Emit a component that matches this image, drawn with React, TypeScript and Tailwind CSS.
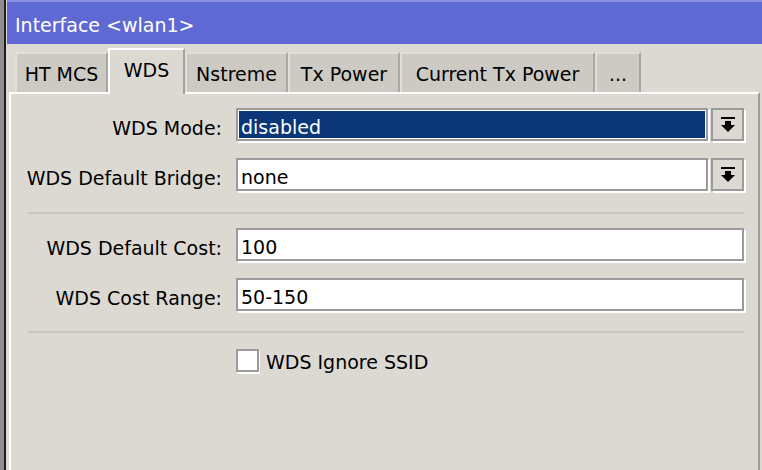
import * as React from "react";

// Winbox-style "Interface <wlan1>" dialog, WDS tab

const tabs: { label: string; w: string }[] = [
  { label: "HT MCS", w: "w-[93px]" },
  { label: "WDS", w: "w-[77px]" },
  { label: "Nstreme", w: "w-[103px]" },
  { label: "Tx Power", w: "w-[112px]" },
  { label: "Current Tx Power", w: "w-[195px]" },
  { label: "...", w: "w-[46px]" },
];

function DropIcon() {
  return (
    <svg width="14" height="16" viewBox="0 0 14 16" className="block">
      <rect x="0" y="0" width="14" height="2" fill="#000" />
      <rect x="4" y="4" width="6" height="4" fill="#000" />
      <polygon points="0,8 14,8 7,15" fill="#000" />
    </svg>
  );
}

function Field({ value, selected }: { value: string; selected?: boolean }) {
  return (
    <div className="h-[33px] flex-1 border-2 border-[#9b9b9b] bg-white p-[1px] shadow-[2px_2px_0_0_#ffffff]">
      <div
        className={
          selected
            ? "flex h-full items-center bg-[#0b3678] pl-[2px] pt-[5px] text-white"
            : "flex h-full items-center pl-[2px] pt-[5px] text-black"
        }
      >
        {value}
      </div>
    </div>
  );
}

function ComboButton() {
  return (
    <div className="flex h-[33px] w-[33px] shrink-0 items-center justify-center border-2 border-[#9b9b9b] bg-[#dcd9d3] shadow-[2px_2px_0_0_#ffffff]">
      <DropIcon />
    </div>
  );
}

function Label({ children }: { children: React.ReactNode }) {
  return (
    <div className="flex h-[35px] items-center justify-end whitespace-nowrap pt-[5px]">{children}</div>
  );
}

export default function App() {
  return (
    <div className="flex h-[470px] w-[762px] overflow-hidden bg-[#dcd9d3] font-['DejaVu_Sans',sans-serif] text-[19px] leading-none text-black">
      <div className="w-[4px] shrink-0 bg-[#8e8e8e]" />
      <div className="w-[2px] shrink-0 bg-[#1e1e1e]" />
      <div className="flex min-w-0 flex-1 flex-col">
        {/* title bar */}
        <div className="ml-[1px] flex h-[44px] shrink-0 items-center border-t-2 border-[#8a91e4] bg-[#5f69d4] pl-[8px] pt-[5px] text-white">
          Interface &lt;wlan1&gt;
        </div>

        {/* tabs */}
        <div className="relative z-10 mt-[4px] flex h-[44px] items-end pl-[9px]">
          {tabs.map((t) =>
            t.label === "WDS" ? (
              <div
                key={t.label}
                className={`-mb-[2px] flex h-[46px] shrink-0 justify-center border-l-2 border-t-2 border-r-2 border-l-white border-t-white border-r-[#a3a09b] bg-[#dcd9d3] pt-[11px] ${t.w}`}
              >
                {t.label}
              </div>
            ) : (
              <div
                key={t.label}
                className={`flex h-[40px] shrink-0 items-center justify-center border-l-2 border-t-2 border-r-2 border-l-[#e2dfd9] border-t-[#e2dfd9] border-r-[#aaa7a2] bg-[#cdcac4] pt-[3px] ${t.w}`}
              >
                {t.label}
              </div>
            )
          )}
        </div>

        {/* tab page */}
        <div className="ml-[3px] mr-[2px] flex-1 border-l-2 border-t-2 border-r-2 border-l-white border-t-white border-r-[#9b9b9b] pl-[17px] pr-[14px] pt-[14px]">
          <div className="grid grid-cols-[194px_1fr] gap-x-[14px] gap-y-[15px]">
            <Label>WDS Mode:</Label>
            <div className="flex gap-[3px]">
              <Field value="disabled" selected />
              <ComboButton />
            </div>
            <Label>WDS Default Bridge:</Label>
            <div className="flex gap-[3px]">
              <Field value="none" />
              <ComboButton />
            </div>
          </div>

          <div className="mb-[14px] mt-[19px] h-[2px] bg-[#c9c6c0]" />

          <div className="grid grid-cols-[194px_1fr] gap-x-[14px] gap-y-[15px]">
            <Label>WDS Default Cost:</Label>
            <div className="flex">
              <Field value="100" />
            </div>
            <Label>WDS Cost Range:</Label>
            <div className="flex">
              <Field value="50-150" />
            </div>
          </div>

          <div className="mb-[13px] mt-[18px] h-[2px] bg-[#c9c6c0]" />

          <div className="flex items-center gap-[7px] pl-[208px] pt-[3px]">
            <div className="h-[23px] w-[23px] border-2 border-[#9b9b9b] bg-white shadow-[1px_2px_0_0_#ffffff]" />
            <span className="pt-[4px]">WDS Ignore SSID</span>
          </div>
        </div>
      </div>
    </div>
  );
}
